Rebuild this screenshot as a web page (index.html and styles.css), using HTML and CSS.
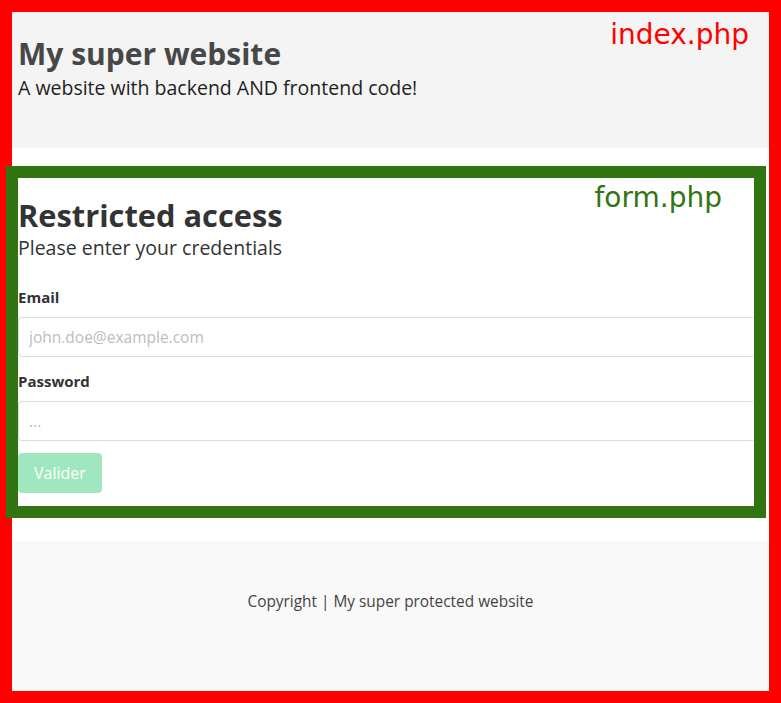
FILE: index.html
```html
<!DOCTYPE html>
<html lang="en">
<head>
<meta charset="utf-8">
<title>My super website</title>
<link rel="stylesheet" href="styles.css">
</head>
<body>
<div class="page">
  <header class="site-header">
    <h1 class="site-title">My super website</h1>
    <p class="site-tagline">A website with backend AND frontend code!</p>
    <span class="file-tag file-tag-index">index.php</span>
  </header>
  <section class="form-box">
    <span class="file-tag file-tag-form">form.php</span>
    <h2 class="form-title">Restricted access</h2>
    <p class="form-subtitle">Please enter your credentials</p>
    <form class="login-form">
      <label class="field-label" for="email">Email</label>
      <input class="field-input" id="email" type="email" placeholder="john.doe@example.com">
      <label class="field-label" for="password">Password</label>
      <input class="field-input" id="password" type="password" placeholder="...">
      <button class="submit-btn" type="button">Valider</button>
    </form>
  </section>
  <footer class="site-footer">
    <p class="footer-text">Copyright | My super protected website</p>
  </footer>
</div>
</body>
</html>
```
FILE: styles.css
```css
* { box-sizing: border-box; }
html, body { margin: 0; padding: 0; background: #fff; }
body { font-family: "Open Sans", "DejaVu Sans", sans-serif; }

.page {
  height: 703px;
  border: 12px solid #ff0000;
  display: flex;
  flex-direction: column;
  background: #fff;
}

.site-header {
  position: relative;
  height: 136px;
  background: #f4f4f4;
  padding: 0 6px;
}
.site-title {
  margin: 24px 0 0;
  font-size: 30px;
  line-height: 36px;
  font-weight: 700;
  color: #474747;
}
.site-tagline {
  margin: 1px 0 0;
  font-size: 19.5px;
  line-height: 30px;
  color: #1e1e1e;
}

.file-tag {
  position: absolute;
  font-family: "DejaVu Sans", sans-serif;
  font-size: 28px;
  line-height: 34px;
}
.file-tag-index { top: 6px; right: 20px; color: #ff0000; }
.file-tag-form { top: 3px; right: 32px; color: #317513; }

.form-box {
  position: relative;
  margin: 18px 3px 0 -6px;
  height: 352px;
  border: 12px solid #317513;
  background: #fff;
}
.form-title {
  margin: 19px 0 0;
  font-size: 30.8px;
  line-height: 36px;
  font-weight: 700;
  color: #333;
}
.form-subtitle {
  margin: 0;
  font-size: 19.5px;
  line-height: 30px;
  color: #333;
}
.login-form {
  display: flex;
  flex-direction: column;
  align-items: flex-start;
  margin-top: 24px;
}
.field-label {
  font-size: 15px;
  line-height: 20px;
  font-weight: 700;
  color: #333;
  margin-bottom: 10px;
}
.field-input {
  width: 100%;
  height: 40px;
  border: 1px solid #dcdcdc;
  border-right-color: transparent;
  border-radius: 4px 0 0 4px;
  padding: 0 10px;
  font-family: inherit;
  font-size: 15.5px;
  color: #333;
  margin: 0 0 14px;
  outline: none;
}
.field-input::placeholder { color: #bdbdbd; }
.submit-btn {
  height: 40px;
  padding: 0 16px;
  border: none;
  border-radius: 4px;
  background: #a0e6bf;
  color: #fff;
  font-family: inherit;
  font-size: 16px;
  margin-top: -2px;
}

.site-footer {
  margin-top: 23px;
  flex: 1;
  background: #f9f9f9;
  padding-top: 49px;
}
.footer-text {
  margin: 0;
  text-align: center;
  font-size: 15.4px;
  line-height: 24px;
  color: #444;
}
```
